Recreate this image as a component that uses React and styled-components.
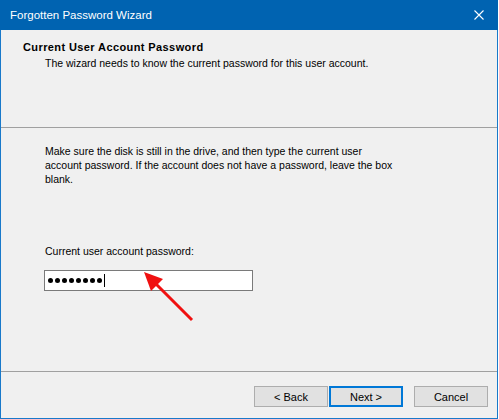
import React from "react"

import styled, { createGlobalStyle } from "styled-components"

const GlobalStyle = createGlobalStyle`
  body {
    margin: 0;
    background: #ffffff;
  }
`

const Window = styled.div`
  position: relative;
  box-sizing: border-box;
  width: 498px;
  height: 419px;
  display: flex;
  flex-direction: column;
  background: #f0f0f0;
  border: 1px solid #1979ca;
  border-top: none;
  font-family: "Liberation Sans", Arial, sans-serif;
  font-size: 10.5px;
  color: #000000;
`

const TitleBar = styled.div`
  height: 30px;
  margin: 0 -1px;
  padding: 0 14px 0 10px;
  display: flex;
  align-items: center;
  justify-content: space-between;
  background: #0063b1;
  color: #ffffff;
  font-size: 11.5px;
`

const Header = styled.div`
  height: 97px;
  box-sizing: border-box;
  padding: 10px 0 0 22px;
  line-height: 14px;
`

const HeaderTitle = styled.div`
  font-size: 11px;
  font-weight: bold;
  letter-spacing: 0.4px;
`

const HeaderSub = styled.div`
  margin-top: 2px;
  padding-left: 22px;
`

const Separator = styled.div`
  height: 1px;
  background: #a0a0a0;
`

const Content = styled.div`
  flex: 1;
  padding: 16px 0 0 44px;
  line-height: 14px;
`

const Paragraph = styled.p`
  margin: 0;
  white-space: nowrap;
`

const Label = styled.div`
  margin-top: 58px;
`

const PasswordBox = styled.div`
  margin: 12px 0 0 -1px;
  box-sizing: border-box;
  width: 209px;
  height: 21px;
  padding-left: 3px;
  display: flex;
  align-items: center;
  gap: 2px;
  background: #ffffff;
  border: 1px solid #7a7a7a;
`

const Dot = styled.span`
  width: 5px;
  height: 5px;
  border-radius: 50%;
  background: #000000;
`

const Caret = styled.span`
  width: 1px;
  height: 13px;
  margin-left: 0;
  background: #000000;
`

const Footer = styled.div`
  display: flex;
  padding: 14px 9px 11px 0;
  justify-content: flex-end;
`

const Button = styled.button`
  box-sizing: border-box;
  width: 74px;
  height: 21px;
  margin-left: ${(p) => p.gap || 0}px;
  padding: 0;
  background: #e1e1e1;
  border: ${(p) => (p.primary ? "2px solid #0078d7" : "1px solid #adadad")};
  font-family: "Liberation Sans", Arial, sans-serif;
  font-size: 11px;
  color: #000000;
`

const Arrow = styled.svg`
  position: absolute;
  left: 135px;
  top: 265px;
`

function App() {
  return (
    <>
      <GlobalStyle />
      <Window>
        <TitleBar>
          <span>Forgotten Password Wizard</span>
          <svg width="10" height="10" viewBox="0 0 10 10">
            <path d="M0.5 0.5 L9.5 9.5 M9.5 0.5 L0.5 9.5" stroke="#ffffff" strokeWidth="1.1" />
          </svg>
        </TitleBar>
        <Header>
          <HeaderTitle>Current User Account Password</HeaderTitle>
          <HeaderSub>The wizard needs to know the current password for this user account.</HeaderSub>
        </Header>
        <Separator />
        <Content>
          <Paragraph>
            Make sure the disk is still in the drive, and then type the current user
            <br />
            account password. If the account does not have a password, leave the box
            <br />
            blank.
          </Paragraph>
          <Label>Current user account password:</Label>
          <PasswordBox>
            {[0, 1, 2, 3, 4, 5, 6, 7].map((i) => (
              <Dot key={i} />
            ))}
            <Caret />
          </PasswordBox>
        </Content>
        <Separator />
        <Footer>
          <Button>&lt; Back</Button>
          <Button primary gap={1}>Next &gt;</Button>
          <Button gap={11}>Cancel</Button>
        </Footer>
        <Arrow width="65" height="60" viewBox="0 0 65 60">
          <line x1="56" y1="55" x2="19" y2="18" stroke="#f01010" strokeWidth="3" />
          <polygon points="8,7 27,14 15,26" fill="#f01010" />
        </Arrow>
      </Window>
    </>
  )
}

export default App
